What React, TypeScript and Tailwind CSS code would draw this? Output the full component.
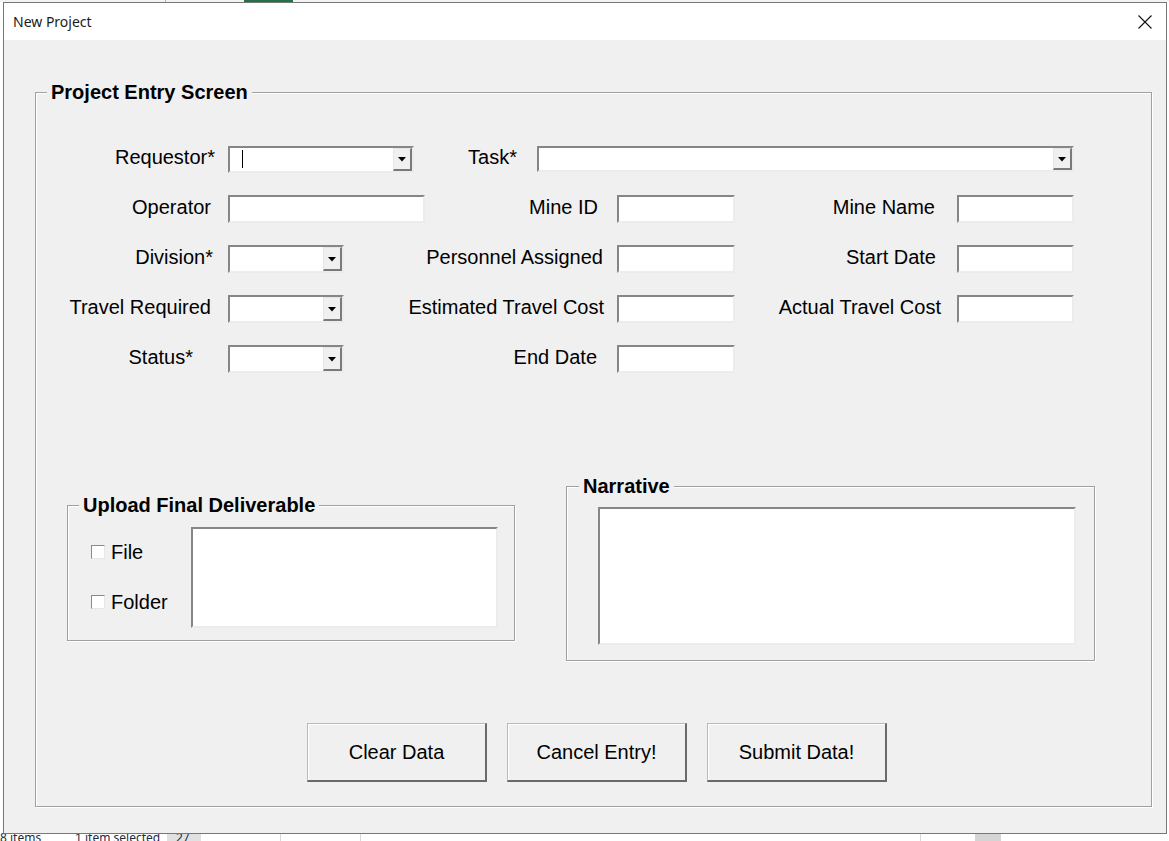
import clsx from "clsx";

const sunken =
  "bg-white border-2 border-t-[#868686] border-l-[#868686] border-b-[#ececec] border-r-[#ececec]";

function TextBox({ className }: { className?: string }) {
  return <div className={clsx("shrink-0", sunken, className)} />;
}

function Combo({ className, caret }: { className?: string; caret?: boolean }) {
  return (
    <div className={clsx("flex shrink-0", sunken, className)}>
      <div className="flex-1">
        {caret && <div className="ml-[12px] mt-[2px] h-[18px] w-px bg-black" />}
      </div>
      <div className="flex w-[19px] items-center justify-center border-t border-l border-[#e6e6e6] border-b-2 border-r-2 border-b-[#7a7a7a] border-r-[#7a7a7a] bg-[#f0f0f0]">
        <svg width="8" height="5" viewBox="0 0 8 5" className="mt-[1px]">
          <polygon points="0,0 8,0 4,4.5" fill="#000" />
        </svg>
      </div>
    </div>
  );
}

function Label({ className, children }: { className: string; children: string }) {
  return (
    <span className={clsx("shrink-0 whitespace-nowrap pb-[5px] text-right text-[20px] leading-none", className)}>
      {children}
    </span>
  );
}

function GroupBox({
  title,
  className,
  titleClass,
  children,
}: {
  title: string;
  className?: string;
  titleClass?: string;
  children?: React.ReactNode;
}) {
  return (
    <div
      className={clsx(
        "relative shrink-0 border border-[#a0a0a0] shadow-[inset_1px_1px_0_#fff,1px_1px_0_#fff]",
        className
      )}
    >
      <span
        className={clsx(
          "absolute -top-[13px] bg-[#f0f0f0] px-[4px] text-[20px] font-bold leading-[24px] whitespace-nowrap",
          titleClass ?? "left-[11px]"
        )}
      >
        {title}
      </span>
      {children}
    </div>
  );
}

function CheckRow({ label }: { label: string }) {
  return (
    <div className="flex h-[24px] items-center">
      <div className="h-[14px] w-[14px] border border-t-[#8a8a8a] border-l-[#8a8a8a] border-b-[#e6e6e6] border-r-[#e6e6e6] bg-white" />
      <span className="ml-[6px] text-[20px] leading-none">{label}</span>
    </div>
  );
}

function WinButton({ children }: { children: string }) {
  return (
    <button className="flex h-[59px] w-[180px] shrink-0 items-center justify-center border-t border-l border-[#b9b9b9] border-b-2 border-r-2 border-b-[#6a6a6a] border-r-[#6a6a6a] bg-[#f0f0f0] text-[20px] leading-none shadow-[inset_1px_1px_0_#fff]">
      {children}
    </button>
  );
}

function Dialog() {
  return (
    <div className="absolute left-[3px] top-[2px] flex h-[832px] w-[1164px] flex-col border border-[#777]">
      <div className="flex h-[37px] shrink-0 items-center justify-between bg-white pl-[9px] pr-[14px]">
        <span className="font-['Noto_Sans',sans-serif] text-[14px] text-[#1b1b1b]">New Project</span>
        <svg width="14" height="14" viewBox="0 0 14 14" className="mt-[1px]">
          <path d="M0.5 0.5 L13.5 13.5 M13.5 0.5 L0.5 13.5" stroke="#111" strokeWidth="1.1" />
        </svg>
      </div>
      <div className="flex-1 bg-[#f0f0f0] pl-[31px] pt-[52px]">
        <GroupBox title="Project Entry Screen" className="h-[715px] w-[1117px] pt-[52px]">
          <div className="flex flex-col gap-[22px]">
            <div className="flex h-[28px] items-center">
              <Label className="w-[179px]">Requestor*</Label>
              <Combo caret className="ml-[13px] h-[27px] w-[186px]" />
              <Label className="w-[103px]">Task*</Label>
              <Combo className="ml-[20px] h-[26px] w-[537px]" />
            </div>
            <div className="flex h-[28px] items-center">
              <Label className="w-[175px]">Operator</Label>
              <TextBox className="ml-[17px] h-[28px] w-[197px]" />
              <Label className="w-[173px]">Mine ID</Label>
              <TextBox className="ml-[19px] h-[28px] w-[118px]" />
              <Label className="w-[200px]">Mine Name</Label>
              <TextBox className="ml-[22px] h-[28px] w-[117px]" />
            </div>
            <div className="flex h-[28px] items-center">
              <Label className="w-[177px]">Division*</Label>
              <Combo className="ml-[15px] h-[28px] w-[116px]" />
              <Label className="w-[259px]">Personnel Assigned</Label>
              <TextBox className="ml-[14px] h-[28px] w-[118px]" />
              <Label className="w-[201px]">Start Date</Label>
              <TextBox className="ml-[21px] h-[28px] w-[117px]" />
            </div>
            <div className="flex h-[28px] items-center">
              <Label className="w-[175px]">Travel Required</Label>
              <Combo className="ml-[17px] h-[28px] w-[116px]" />
              <Label className="w-[260px]">Estimated Travel Cost</Label>
              <TextBox className="ml-[13px] h-[28px] w-[118px]" />
              <Label className="w-[206px]">Actual Travel Cost</Label>
              <TextBox className="ml-[16px] h-[28px] w-[117px]" />
            </div>
            <div className="flex h-[28px] items-center">
              <Label className="w-[157px]">Status*</Label>
              <Combo className="ml-[35px] h-[28px] w-[116px]" />
              <Label className="w-[253px]">End Date</Label>
              <TextBox className="ml-[20px] h-[28px] w-[118px]" />
            </div>
          </div>

          <div className="mt-[113px] flex items-start">
            <GroupBox title="Upload Final Deliverable" className="ml-[31px] mt-[19px] flex h-[136px] w-[448px] pt-[21px]">
              <div className="flex w-[123px] flex-col gap-[26px] pl-[23px] pt-[13px]">
                <CheckRow label="File" />
                <CheckRow label="Folder" />
              </div>
              <TextBox className="h-[101px] w-[307px]" />
            </GroupBox>
            <GroupBox
              title="Narrative"
              titleClass="left-[12px]"
              className="ml-[51px] h-[175px] w-[529px] pl-[31px] pt-[20px]"
            >
              <TextBox className="h-[138px] w-[478px]" />
            </GroupBox>
          </div>

          <div className="ml-[271px] mt-[62px] flex gap-[20px]">
            <WinButton>Clear Data</WinButton>
            <WinButton>Cancel Entry!</WinButton>
            <WinButton>Submit Data!</WinButton>
          </div>
        </GroupBox>
      </div>
    </div>
  );
}

export default function App() {
  return (
    <div className="relative h-[841px] w-[1169px] overflow-hidden bg-white font-['Liberation_Sans',Arial,sans-serif] text-black">
      {/* what shows behind the dialog */}
      <div className="flex h-full flex-col">
        <div className="flex h-[2px] bg-[#f3f3f3]">
          <div className="w-[166px] border-r border-[#b5b5b5]" />
          <div className="ml-[78px] w-[49px] bg-[#217346]" />
        </div>
        <div className="flex-1" />
        <div className="flex h-[10px] items-start font-['Noto_Sans',sans-serif] text-[12px] leading-[14px] text-[#1c2a44]">
          <span className="w-[75px] whitespace-nowrap">8 items</span>
          <span className="w-[92px] overflow-hidden whitespace-nowrap">1 item selected</span>
          <span className="h-full w-[34px] bg-[#e1e1e1] pl-[9px]">27</span>
          <div className="ml-[79px] h-full border-l border-[#d9d9d9]" />
          <div className="ml-[79px] h-full border-l border-[#d9d9d9]" />
          <div className="ml-[559px] h-full border-l border-[#d9d9d9]" />
          <div className="ml-[54px] h-full w-[26px] bg-[#d4d4d4]" />
        </div>
      </div>
      <Dialog />
    </div>
  );
}
